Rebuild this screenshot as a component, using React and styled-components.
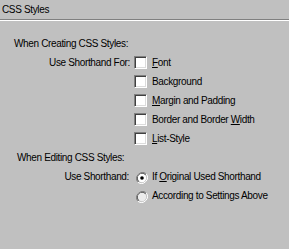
import React from 'react';
import styled, { createGlobalStyle } from 'styled-components';

const Global = createGlobalStyle`
  html, body {
    margin: 0;
    padding: 0;
    background: #c0c0c0;
  }
  body {
    font-family: "Liberation Sans", Arial, sans-serif;
    font-size: 10px;
    letter-spacing: -0.35px;
    color: #000;
  }
`;

const Panel = styled.div`
  width: 289px;
  height: 249px;
  background: #c0c0c0;
  overflow: hidden;
`;

const Title = styled.div`
  height: 19px;
  line-height: 20px;
  padding-left: 2px;
`;

const Rule = styled.div`
  height: 1px;
  background: #808080;
  border-bottom: 1px solid #fff;
`;

const Body = styled.div`
  display: grid;
  grid-template-columns: 134px 1fr;
  grid-auto-rows: 19px;
  padding-top: 13px;
`;

const Heading = styled.div`
  grid-column: 1 / -1;
  line-height: 19px;
  padding-left: ${p => p.$indent}px;
`;

const Label = styled.div`
  line-height: 19px;
  text-align: right;
  padding-right: ${p => p.$pad || 4}px;
`;

const Option = styled.label`
  grid-column: 2;
  display: flex;
  align-items: center;
  gap: ${p => p.$gap || 5}px;
  line-height: 19px;
`;

const Check = styled.span`
  width: 13px;
  height: 13px;
  box-sizing: border-box;
  background: #fff;
  border-top: 1px solid #808080;
  border-left: 1px solid #808080;
  border-right: 1px solid #fff;
  border-bottom: 1px solid #fff;
  box-shadow: inset 1px 1px 0 #404040, inset -1px -1px 0 #dcdcdc;
  margin-top: ${p => p.$nudge || 0}px;
`;

const Radio = styled.svg`
  width: 12px;
  height: 12px;
  margin-left: 2px;
  margin-top: 2px;
`;

const Key = styled.span`
  text-decoration: underline;
  text-underline-offset: 1px;
`;

function RadioMark({ on, fill }) {
  return (
    <Radio viewBox="0 0 12 12">
      <path d="M10.2 1.8 A6 6 0 0 0 1.8 10.2" fill="none" stroke="#808080" strokeWidth="1" />
      <path d="M9.5 2.5 A5 5 0 0 0 2.5 9.5" fill="none" stroke="#404040" strokeWidth="1" />
      <path d="M1.8 10.2 A6 6 0 0 0 10.2 1.8" fill="none" stroke="#fff" strokeWidth="1" />
      <circle cx="6" cy="6" r="4.2" fill={fill} />
      {on && <circle cx="6" cy="6" r="1.8" fill="#000" />}
    </Radio>
  );
}

export default function App() {
  return (
    <Panel>
      <Global />
      <Title>CSS Styles</Title>
      <Rule />
      <Body>
        <Heading $indent={14}>When Creating CSS Styles:</Heading>

        <Label>Use Shorthand For:</Label>
        <Option><Check /><span><Key>F</Key>ont</span></Option>
        <Option><Check /><span>Background</span></Option>
        <Option><Check /><span><Key>M</Key>argin and Padding</span></Option>
        <Option><Check /><span>Border and Border <Key>W</Key>idth</span></Option>
        <Option><Check /><span><Key>L</Key>ist-Style</span></Option>

        <Heading $indent={17}>When Editing CSS Styles:</Heading>

        <Label $pad={5}>Use Shorthand:</Label>
        <Option $gap={4}><RadioMark on fill="#fff" /><span>If <Key>O</Key>riginal Used Shorthand</span></Option>
        <Option $gap={4}><RadioMark fill="#ececec" /><span>According to Settings Above</span></Option>
      </Body>
    </Panel>
  );
}
